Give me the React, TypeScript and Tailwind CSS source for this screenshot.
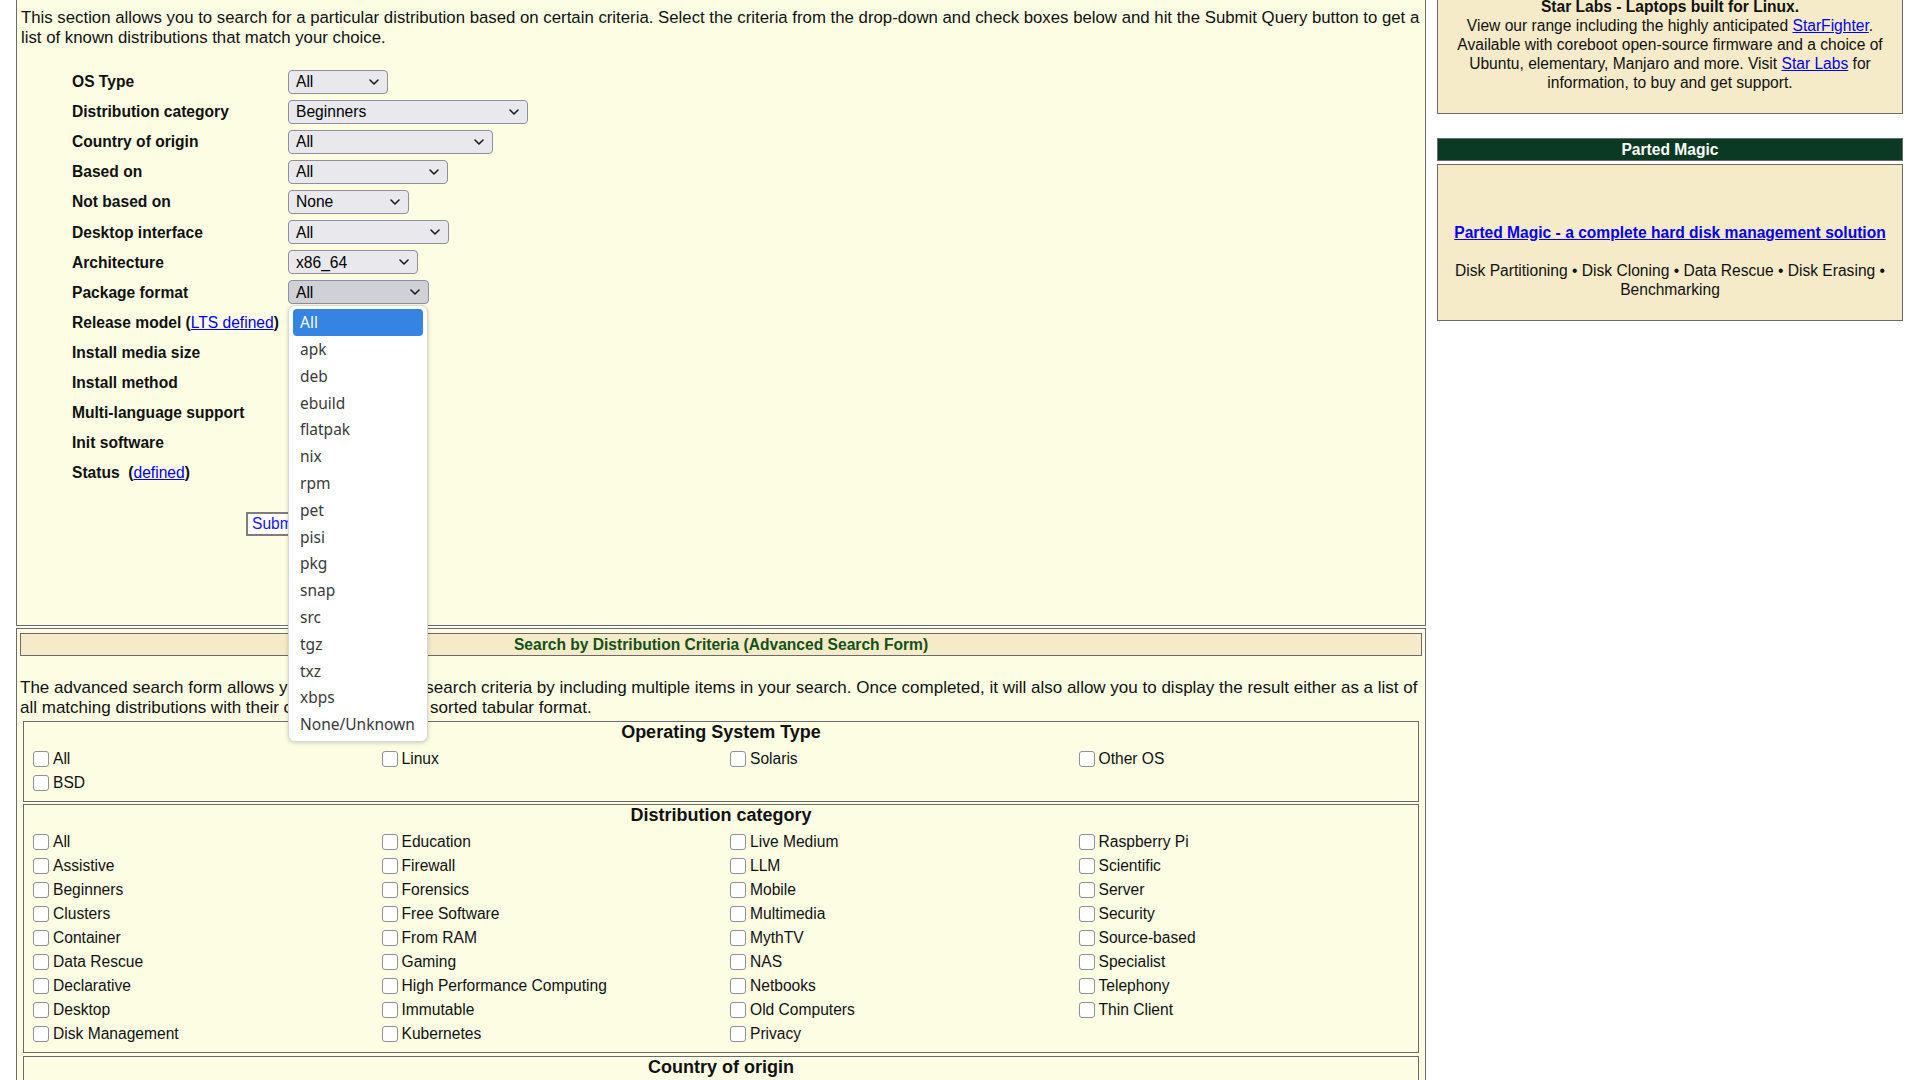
import React from 'react';

const Chevron: React.FC = () => (
  <svg width="10" height="6" viewBox="0 0 10 6" className="shrink-0">
    <path d="M1 1l4 4 4-4" fill="none" stroke="#1b1b1b" strokeWidth="1.6" strokeLinecap="round" strokeLinejoin="round" />
  </svg>
);

const FakeSelect: React.FC<{ value: string; width: string; open?: boolean }> = ({ value, width, open }) => (
  <div
    className={`${width} h-[24px] flex items-center justify-between pl-[7px] pr-[8px] border border-[#8f8f9d] rounded-[4px] text-[15.6px] text-black ${
      open ? 'bg-[#d0d0d7]' : 'bg-[#e9e9ed]'
    }`}
  >
    <span>{value}</span>
    <Chevron />
  </div>
);

const packageOptions = ['All', 'apk', 'deb', 'ebuild', 'flatpak', 'nix', 'rpm', 'pet', 'pisi', 'pkg', 'snap', 'src', 'tgz', 'txz', 'xbps', 'None/Unknown'];

const Checkbox: React.FC<{ label?: string }> = ({ label }) =>
  label ? (
    <div className="h-[24px] flex items-center pl-[9px]">
      <span className="w-[16px] h-[16px] rounded-[3px] border border-[#8f8f9d] bg-white shrink-0" />
      <span className="ml-[4px] text-[15.6px]">{label}</span>
    </div>
  ) : (
    <div className="h-[24px]" />
  );

const CheckGroup: React.FC<{ title: string; rows: string[][]; last?: boolean }> = ({ title, rows, last }) => (
  <div className={`mx-[3px] border border-[#6b6b6b] ${last ? '' : 'pb-[6px]'}`}>
    <div className="h-[21px] leading-[21px] text-center text-[18px] font-bold">{title}</div>
    <div className="mt-[4px] grid grid-cols-4">
      {rows.map((row, i) =>
        [0, 1, 2, 3].map((j) => <Checkbox key={`${i}-${j}`} label={row[j]} />)
      )}
    </div>
  </div>
);

const osRows = [
  ['All', 'Linux', 'Solaris', 'Other OS'],
  ['BSD'],
];

const categoryCols = [
  ['All', 'Assistive', 'Beginners', 'Clusters', 'Container', 'Data Rescue', 'Declarative', 'Desktop', 'Disk Management'],
  ['Education', 'Firewall', 'Forensics', 'Free Software', 'From RAM', 'Gaming', 'High Performance Computing', 'Immutable', 'Kubernetes'],
  ['Live Medium', 'LLM', 'Mobile', 'Multimedia', 'MythTV', 'NAS', 'Netbooks', 'Old Computers', 'Privacy'],
  ['Raspberry Pi', 'Scientific', 'Server', 'Security', 'Source-based', 'Specialist', 'Telephony', 'Thin Client'],
];
const categoryRows = categoryCols[0].map((_, i) => categoryCols.map((c) => c[i]));

const link = 'text-[#0000ee] underline';

export default function App() {
  const rows: { label: React.ReactNode; select?: React.ReactNode }[] = [
    { label: 'OS Type', select: <FakeSelect value="All" width="w-[100px]" /> },
    { label: 'Distribution category', select: <FakeSelect value="Beginners" width="w-[240px]" /> },
    { label: 'Country of origin', select: <FakeSelect value="All" width="w-[205px]" /> },
    { label: 'Based on', select: <FakeSelect value="All" width="w-[160px]" /> },
    { label: 'Not based on', select: <FakeSelect value="None" width="w-[121px]" /> },
    { label: 'Desktop interface', select: <FakeSelect value="All" width="w-[161px]" /> },
    { label: 'Architecture', select: <FakeSelect value="x86_64" width="w-[130px]" /> },
    {
      label: 'Package format',
      select: (
        <div className="relative">
          <FakeSelect value="All" width="w-[141px]" open />
          {/* open dropdown list */}
          <div className="absolute left-0 top-[25px] z-10 w-[140px] rounded-[7px] border border-[#d8d8d8] bg-white shadow-[0_1px_4px_rgba(0,0,0,0.18)] px-[4px] py-[3px] font-['Noto_Sans',sans-serif] text-[15.5px]">
            {packageOptions.map((o, i) => (
              <div
                key={o}
                className={`h-[26.8px] flex items-center pl-[7px] rounded-[4px] ${
                  i === 0 ? 'bg-[#3584e4] text-white' : 'text-[#3a3a3a]'
                }`}
              >
                {o}
              </div>
            ))}
          </div>
        </div>
      ),
    },
    {
      label: (
        <>
          Release model (<a className={`${link} font-normal`}>LTS defined</a>)
        </>
      ),
    },
    { label: 'Install media size' },
    { label: 'Install method' },
    { label: 'Multi-language support' },
    { label: 'Init software' },
    {
      label: (
        <>
          Status&nbsp;&nbsp;(<a className={`${link} font-normal`}>defined</a>)
        </>
      ),
    },
  ];

  return (
    <div className="min-h-screen bg-white font-['Liberation_Sans',Arial,sans-serif] text-[15.6px] text-[#111] overflow-hidden">
      <div className="flex items-start pl-[16px] gap-[11px]">
        {/* main column */}
        <div className="w-[1410px] shrink-0">
          <div className="h-[626px] border-x border-b border-[#6b6b6b] bg-[#fcfde2] px-[4px] pt-[8px]">
            <p className="text-[16.8px] leading-[20px]">
              This section allows you to search for a particular distribution based on certain criteria. Select the criteria from the drop-down and check boxes below and hit the Submit Query button to get a list of known distributions that match your choice.
            </p>
            <div className="mt-[18.7px] ml-[51px]">
              {rows.map((r, i) => (
                <div key={i} className="h-[30.1px] flex items-center">
                  <div className="w-[216px] font-bold">{r.label}</div>
                  {r.select}
                </div>
              ))}
            </div>
            <div className="mt-[23.5px] ml-[225px]">
              <button className="h-[24px] px-[4px] border-2 border-[#7d7d7d] bg-white text-[#1515e6] text-[15.6px] leading-[18px]">
                Submit Query
              </button>
            </div>
          </div>

          <div className="mt-[2px] h-[460px] border border-[#6b6b6b] bg-[#fcfde2] px-[3px] pt-[4px]">
            <div className="h-[23px] border border-[#6b6b6b] bg-[#f5ebc8] flex items-center justify-center font-bold text-[#13501a]">
              Search by Distribution Criteria (Advanced Search Form)
            </div>
            <p className="mt-[22px] text-[17px] leading-[20px]">
              The advanced search form allows you to specify your search criteria by including multiple items in your search. Once completed, it will also allow you to display the result either as a list of all matching distributions with their complete facts in a sorted tabular format.
            </p>
            <div className="mt-[3px]">
              <CheckGroup title="Operating System Type" rows={osRows} />
            </div>
            <div className="mt-[2px]">
              <CheckGroup title="Distribution category" rows={categoryRows} />
            </div>
            <div className="mt-[3px]">
              <CheckGroup title="Country of origin" rows={[]} last />
            </div>
          </div>
        </div>

        {/* right column */}
        <div className="w-[466px] shrink-0 -mt-[4px]">
          <div className="border border-[#6b6b6b] bg-[#f5ebc8] px-[10px] pb-[21px] text-center leading-[19px]">
            <div className="font-bold">Star Labs - Laptops built for Linux.</div>
            <div>
              View our range including the highly anticipated <a className={link}>StarFighter</a>.<br />
              Available with coreboot open-source firmware and a choice of<br />
              Ubuntu, elementary, Manjaro and more. Visit <a className={link}>Star Labs</a> for<br />
              information, to buy and get support.
            </div>
          </div>
          <div className="mt-[24px] h-[23px] border border-[#6b6b6b] bg-[#0b3a24] flex items-center justify-center font-bold text-white">
            Parted Magic
          </div>
          <div className="mt-[3px] border border-[#6b6b6b] bg-[#f5ebc8] px-[10px] pt-[58px] pb-[21px] text-center leading-[19px]">
            <a className={`${link} font-bold`}>Parted Magic - a complete hard disk management solution</a>
            <div className="mt-[19px]">
              Disk Partitioning • Disk Cloning • Data Rescue • Disk Erasing • Benchmarking
            </div>
          </div>
        </div>
      </div>
    </div>
  );
}
